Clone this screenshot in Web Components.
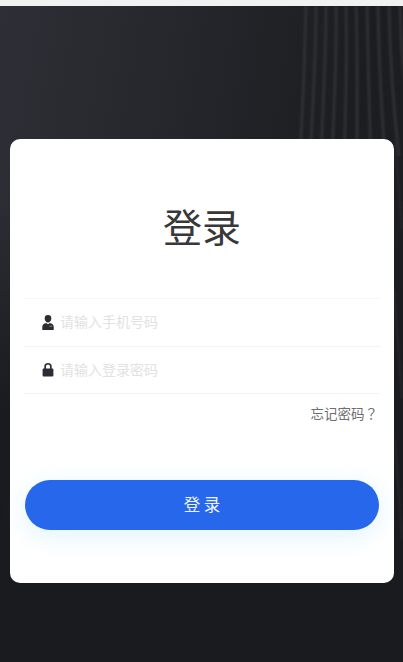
<!DOCTYPE html>
<html lang="zh">
<head>
<meta charset="utf-8">
<title>登录</title>
<style>
  html, body { margin: 0; height: 100%; }
  body { font-family: "Noto Sans CJK SC", "Liberation Sans", sans-serif; overflow: hidden; }
</style>
</head>
<body>
<login-page>
  <login-card heading="登录">
    <login-field placeholder="请输入手机号码" icon="user"></login-field>
    <login-field placeholder="请输入登录密码" icon="lock"></login-field>
    <forgot-link slot="forgot">忘记密码<span lang="zh-TW">？</span></forgot-link>
    <login-button slot="action">登 录</login-button>
  </login-card>
</login-page>

<script>
class LoginPage extends HTMLElement {
    constructor() {
        super();
        this.attachShadow({ mode: 'open' });
        this.shadowRoot.innerHTML = `
            <style>
                :host {
                    display: block;
                    position: relative;
                    height: 662px;
                    box-sizing: border-box;
                    padding-top: 6px;
                    background: #f1f1f2;
                    overflow: hidden;
                }
                .bg {
                    position: relative;
                    height: 656px;
                    box-sizing: border-box;
                    padding: 133px 9px 0 10px;
                    overflow: hidden;
                    background:
                        linear-gradient(180deg, rgba(26,27,31,0) 30%, #1a1b1f 62%),
                        linear-gradient(100deg, #2e2f36 0%, #26272c 35%, #1c1d21 72%, #1e1f23 100%);
                }
                svg.lines {
                    position: absolute;
                    left: 283px;
                    top: 0;
                    width: 120px;
                    height: 150px;
                    filter: blur(1px);
                }
                svg.streak {
                    position: absolute;
                    left: 393px;
                    top: 133px;
                    width: 10px;
                    height: 450px;
                    filter: blur(.8px);
                }
                ::slotted(*) { position: relative; }
            </style>
            <div class="bg">
                <svg class="lines" viewBox="0 0 120 150" fill="none" stroke="#313135" stroke-width="2.800">
                    <path d="M23 0C22 50 20 100 17 150"/>
                    <path d="M33 0C33 50 30 100 27 150"/>
                    <path d="M43 0C43 50 40 100 38 150"/>
                    <path d="M53 0C54 50 51 100 49 150"/>
                    <path d="M63 0C64 50 63 100 61 150"/>
                    <path d="M73 0C75 50 74 100 74 150"/>
                    <path d="M84 0C85 50 86 100 88 150"/>
                    <path d="M95 0C96 50 98 100 102 150"/>
                    <path d="M106 0C107 50 110 100 116 150"/>
                    <path d="M117 0C118 50 122 100 130 150"/>
                </svg>
                <svg class="streak" viewBox="0 0 10 450" fill="none" stroke="#2d2d31" stroke-width="1.400">
                    <path d="M2 0L9 90"/>
                    <path d="M1 150L9 260"/>
                    <path d="M2 300L9 400"/>
                </svg>
                <slot></slot>
            </div>
        `;
    }
}

class LoginCard extends HTMLElement {
    constructor() {
        super();
        this.attachShadow({ mode: 'open' });
    }

    connectedCallback() {
        const heading = this.getAttribute('heading') || '';
        this.shadowRoot.innerHTML = `
            <style>
                :host {
                    display: block;
                    position: relative;
                    height: 444px;
                    box-sizing: border-box;
                    padding: 0 14px;
                    background: #fff;
                    border-radius: 10px;
                }
                h1 {
                    margin: 0;
                    height: 159px;
                    box-sizing: border-box;
                    padding-top: 59px;
                    font-size: 39px;
                    font-weight: 400;
                    line-height: 54px;
                    color: #383838;
                    text-align: center;
                }
                .fields { border-top: 1px solid #f6f6f6; }
                .forgot { display: flex; justify-content: flex-end; padding: 10px 2px 0 0; }
                .action { margin: 58px 1px 0; }
            </style>
            <h1>${heading}</h1>
            <div class="fields"><slot></slot></div>
            <div class="forgot"><slot name="forgot"></slot></div>
            <div class="action"><slot name="action"></slot></div>
        `;
    }
}

class LoginField extends HTMLElement {
    constructor() {
        super();
        this.attachShadow({ mode: 'open' });
    }

    connectedCallback() {
        const placeholder = this.getAttribute('placeholder') || '';
        const user = `<path d="M6 0a3.300 3.300 0 0 1 3.300 3.400c0 2-1.400 4-3.300 4s-3.300-2-3.300-4A3.300 3.300 0 0 1 6 0z"/>
            <path d="M.3 15v-3.200c0-2.100 1.600-3.300 3.900-3.800L6 9.200 7.800 8c2.300.5 3.900 1.700 3.900 3.800V15z"/>
            <path d="M7.400 11.200h2.400" stroke="#8a8f98" stroke-width="1"/>`;
        const lock = `<path d="M2.300 6.500V4.600a3.700 3.700 0 0 1 7.400 0v1.900h.8c.5 0 .9.400.9.900v6.200c0 .5-.4.900-.9.900h-9c-.5 0-.9-.4-.9-.9V7.400c0-.5.400-.9.900-.9zm1.700 0h4V4.600a2 2 0 0 0-4 0z"/>`;
        this.shadowRoot.innerHTML = `
            <style>
                :host {
                    display: flex;
                    align-items: center;
                    gap: 6px;
                    height: 46.500px;
                    padding-left: 18px;
                    border-bottom: 1px solid #f4f4f4;
                    font-size: 14px;
                    color: #e2e2e2;
                }
                svg { width: 12px; height: 15px; fill: #2b2d33; flex: none; }
                span { position: relative; top: -1px; }
            </style>
            <svg viewBox="0 0 12 15">${this.getAttribute('icon') === 'lock' ? lock : user}</svg>
            <span>${placeholder}</span>
        `;
    }
}

class ForgotLink extends HTMLElement {
    constructor() {
        super();
        this.attachShadow({ mode: 'open' });
        this.shadowRoot.innerHTML = `
            <style>
                :host {
                    display: block;
                    font-size: 13.500px;
                    line-height: 18px;
                    color: #6f6f6f;
                }
                ::slotted(span) { font-family: "Noto Sans CJK TC", sans-serif; }
            </style>
            <slot></slot>
        `;
    }
}

class LoginButton extends HTMLElement {
    constructor() {
        super();
        this.attachShadow({ mode: 'open' });
        this.shadowRoot.innerHTML = `
            <style>
                :host {
                    display: flex;
                    align-items: center;
                    justify-content: center;
                    height: 50px;
                    padding-bottom: 2px;
                    box-sizing: border-box;
                    border-radius: 25px;
                    background: #2767ec;
                    box-shadow: 0 6px 26px rgba(120, 210, 250, .24);
                    color: #eef4ff;
                    font-size: 16.500px;
                }
            </style>
            <slot></slot>
        `;
    }
}

customElements.define('login-page', LoginPage);
customElements.define('login-card', LoginCard);
customElements.define('login-field', LoginField);
customElements.define('forgot-link', ForgotLink);
customElements.define('login-button', LoginButton);
</script>
</body>
</html>
